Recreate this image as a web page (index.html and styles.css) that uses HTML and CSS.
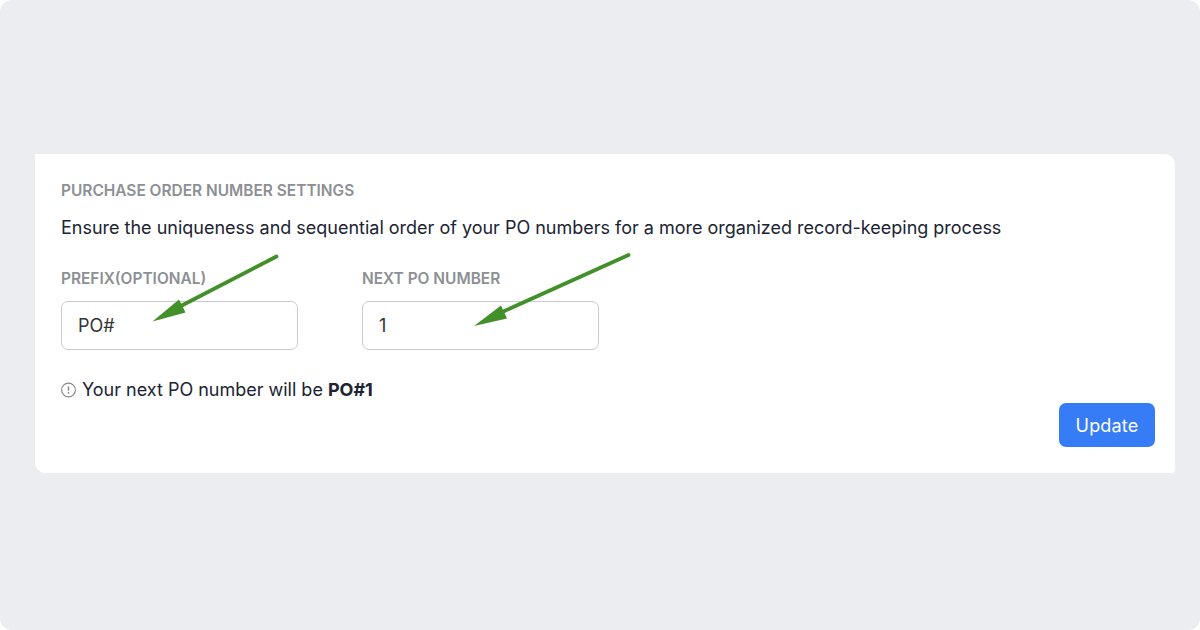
FILE: index.html
```html
<!DOCTYPE html>
<html lang="en">
<head>
  <meta charset="UTF-8">
  <meta name="viewport" content="width=device-width, initial-scale=1.0">
  <title>Purchase Order Number Settings</title>
  <link rel="stylesheet" href="styles.css">
</head>
<body>
  <div class="page">
    <form class="card">
      <h2 class="card-title">PURCHASE ORDER NUMBER SETTINGS</h2>
      <p class="description">Ensure the uniqueness and sequential order of your PO numbers for a more organized record-keeping process</p>
      <div class="fields">
        <div class="field">
          <label for="prefix">PREFIX(OPTIONAL)</label>
          <input type="text" id="prefix" value="PO#">
        </div>
        <div class="field">
          <label for="nextNumber">NEXT PO NUMBER</label>
          <input type="text" id="nextNumber" value="1">
        </div>
      </div>
      <div class="hint">
        <svg class="hint-icon" width="15" height="16" viewBox="0 0 15 16" fill="none" stroke="#85868a">
          <circle cx="7.5" cy="8" r="6.9" stroke-width="1.1"/>
          <path d="M7.5 4.4v4.4M7.5 10v1.6" stroke-width="1.5"/>
        </svg>
        <span>Your next PO number will be <b>PO#1</b></span>
      </div>
      <button type="button" class="update">Update</button>
    </form>
    <svg class="arrows" width="1200" height="630" viewBox="0 0 1200 630">
      <g stroke="#429029" stroke-width="3.8" stroke-linecap="round">
        <path d="M276.500 256.500L178 307.500"/>
        <path d="M628.500 255L500 313"/>
      </g>
      <g fill="#429029">
        <path d="M152.500 321.500L179 299.500L185.500 312.500Z"/>
        <path d="M474 326L501 305.500L507 318.500Z"/>
      </g>
    </svg>
  </div>
</body>
</html>
```

FILE: styles.css
```css
* {
  box-sizing: border-box;
}
body {
  margin: 0;
  background: #fff;
  color: #202332;
  font-family: Inter, sans-serif;
  font-size: 17.99px;
}
.page {
  position: relative;
  height: 630px;
  padding: 154px 25px 0 35px;
  background: #ebedf1;
  border-radius: 12px;
  overflow: hidden;
}
.card {
  display: flex;
  flex-direction: column;
  height: 319px;
  padding: 26px 20px 26px 26px;
  background: #fff;
  border-radius: 0 10px 4px 10px;
}
.card-title,
label {
  margin: 0;
  color: #8c8f94;
  font-size: 15.44px;
  font-weight: 600;
  line-height: 22px;
}
.description {
  margin: 14px 0 0;
  line-height: 24px;
  white-space: nowrap;
}
.fields {
  display: flex;
  gap: 64px;
  margin-top: 28px;
}
.field {
  display: flex;
  flex-direction: column;
  width: 237px;
}
input {
  width: 100%;
  height: 49px;
  margin-top: 11px;
  padding: 0 16px;
  border: 1.5px solid #c8cad6;
  border-radius: 7px;
  background: #fff;
  color: #333;
  font: inherit;
}
.hint {
  display: flex;
  align-items: center;
  gap: 6px;
  margin-top: 28px;
  line-height: 24px;
}
.hint b {
  font-weight: 700;
}
.update {
  align-self: flex-end;
  width: 96px;
  height: 45px;
  margin-top: 1px;
  padding: 0;
  border: none;
  border-radius: 7px;
  background: #367cf7;
  color: #fff;
  font: inherit;
  letter-spacing: 0.2px;
}
/* arrows lie over the form */
.arrows {
  position: absolute;
  top: 0;
  left: 0;
  pointer-events: none;
}
```
